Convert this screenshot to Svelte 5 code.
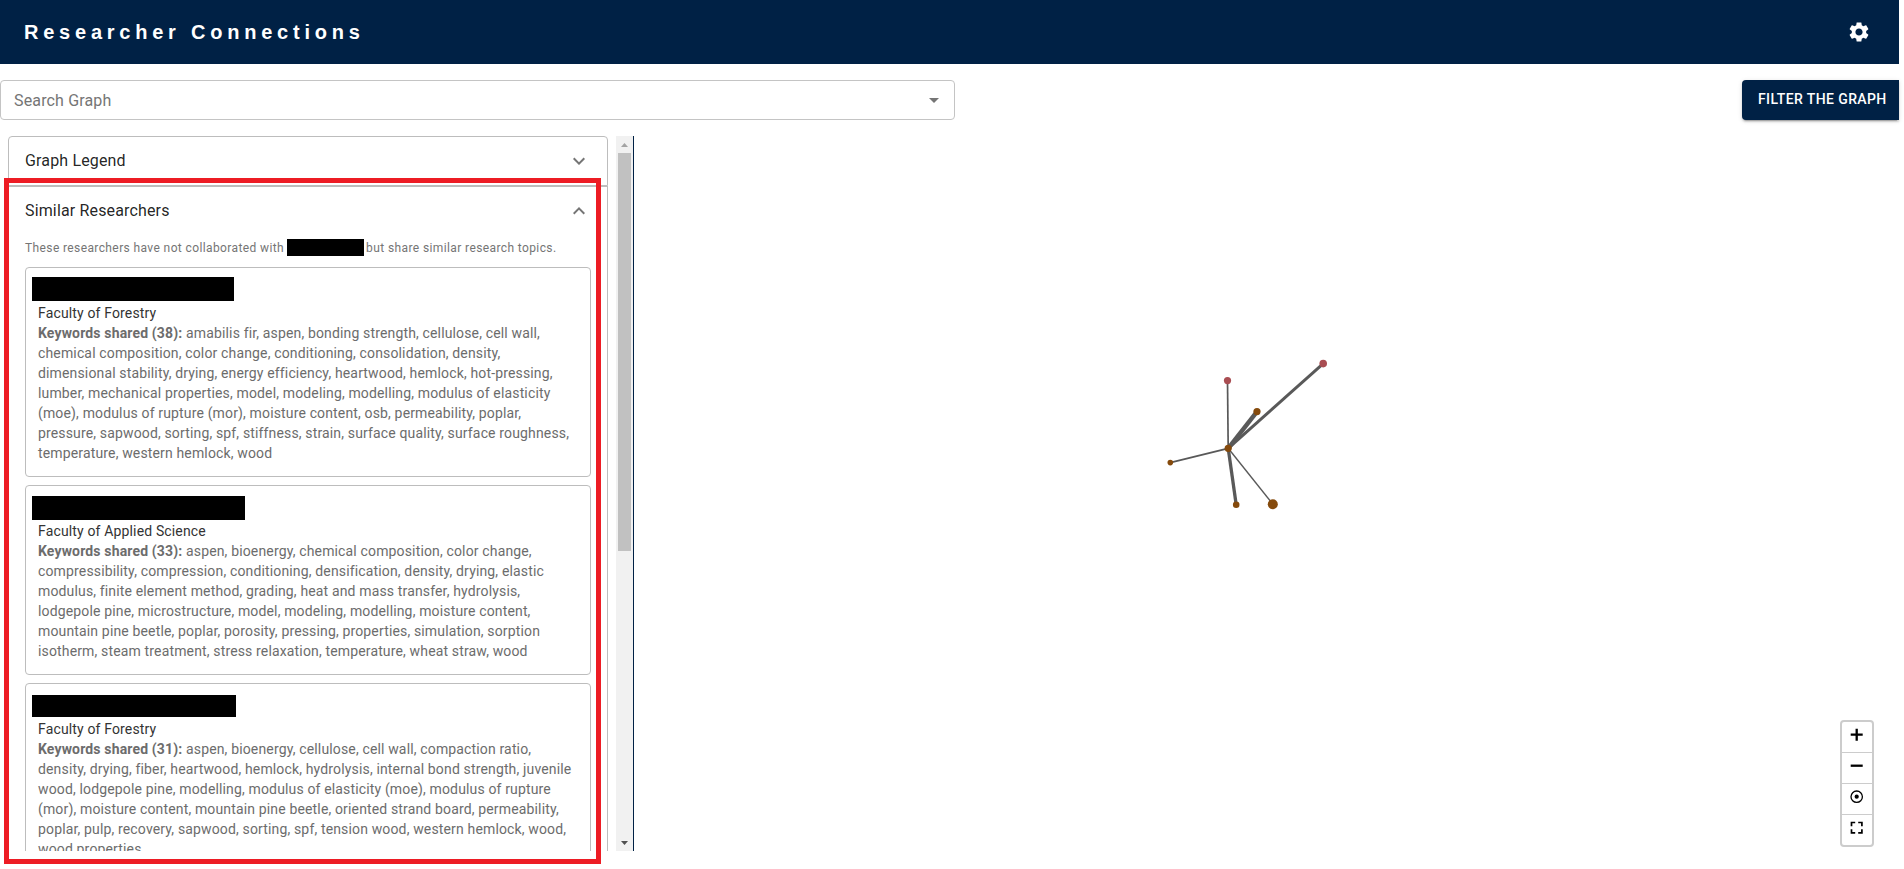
<script>
  const researchers = [
    {
      faculty: 'Faculty of Forestry', count: 38, bar: 202, barHeight: 24, top: 9, lead: 35,
      keywords: 'amabilis fir, aspen, bonding strength, cellulose, cell wall, chemical composition, color change, conditioning, consolidation, density, dimensional stability, drying, energy efficiency, heartwood, hemlock, hot-pressing, lumber, mechanical properties, model, modeling, modelling, modulus of elasticity (moe), modulus of rupture (mor), moisture content, osb, permeability, poplar, pressure, sapwood, sorting, spf, stiffness, strain, surface quality, surface roughness, temperature, western hemlock, wood'
    },
    {
      faculty: 'Faculty of Applied Science', count: 33, bar: 213, barHeight: 24, top: 10, lead: 35,
      keywords: 'aspen, bioenergy, chemical composition, color change, compressibility, compression, conditioning, densification, density, drying, elastic modulus, finite element method, grading, heat and mass transfer, hydrolysis, lodgepole pine, microstructure, model, modeling, modelling, moisture content, mountain pine beetle, poplar, porosity, pressing, properties, simulation, sorption isotherm, steam treatment, stress relaxation, temperature, wheat straw, wood'
    },
    {
      faculty: 'Faculty of Forestry', count: 31, bar: 204, barHeight: 22, top: 11, lead: 35,
      keywords: 'aspen, bioenergy, cellulose, cell wall, compaction ratio, density, drying, fiber, heartwood, hemlock, hydrolysis, internal bond strength, juvenile wood, lodgepole pine, modelling, modulus of elasticity (moe), modulus of rupture (mor), moisture content, mountain pine beetle, oriented strand board, permeability, poplar, pulp, recovery, sapwood, sorting, spf, tension wood, western hemlock, wood, wood properties'
    }
  ];
  const hub = { x: 1228.2, y: 448.3 };
  const nodes = [
    { x: 1227.5, y: 380.6, r: 3.6, w: 1.7, c: '#a94d52' },
    { x: 1323.2, y: 363.6, r: 3.8, w: 3, c: '#a94d52' },
    { x: 1257, y: 411.6, r: 3.6, w: 4.4, c: '#854a0c' },
    { x: 1170.3, y: 462.6, r: 2.8, w: 1.7, c: '#854a0c' },
    { x: 1236.2, y: 504.8, r: 3.3, w: 3.3, c: '#854a0c' },
    { x: 1272.8, y: 504.2, r: 5, w: 1.4, c: '#854a0c' }
  ];
</script>

<div class="page">
  <header>
    <h1>Researcher Connections</h1>
    <svg width="24" height="24" viewBox="0 0 24 24" fill="#fff"><path d="M19.14 12.94c.04-.3.06-.61.06-.94 0-.32-.02-.64-.07-.94l2.03-1.58c.18-.14.23-.41.12-.61l-1.92-3.32c-.12-.22-.37-.29-.59-.22l-2.39.96c-.5-.38-1.03-.7-1.62-.94l-.36-2.54c-.04-.24-.24-.41-.48-.41h-3.84c-.24 0-.43.17-.47.41l-.36 2.54c-.59.24-1.13.57-1.62.94l-2.39-.96c-.22-.08-.47 0-.59.22L2.74 8.87c-.12.21-.08.47.12.61l2.03 1.58c-.05.3-.09.63-.09.94s.02.64.07.94l-2.03 1.58c-.18.14-.23.41-.12.61l1.92 3.32c.12.22.37.29.59.22l2.39-.96c.5.38 1.03.7 1.62.94l.36 2.54c.05.24.24.41.48.41h3.84c.24 0 .44-.17.47-.41l.36-2.54c.59-.24 1.13-.56 1.62-.94l2.39.96c.22.08.47 0 .59-.22l1.92-3.32c.12-.22.07-.47-.12-.61l-2.01-1.58zM12 15.6c-1.98 0-3.6-1.62-3.6-3.6s1.62-3.6 3.6-3.6 3.6 1.62 3.6 3.6-1.62 3.6-3.6 3.6z" /></svg>
  </header>

  <div class="tools">
    <div class="search">
      <span>Search Graph</span>
      <svg width="24" height="24" viewBox="0 0 24 24" fill="#757575"><path d="M7 10l5 5 5-5z" /></svg>
    </div>
    <button class="filter">FILTER THE GRAPH</button>
  </div>

  <main>
    <aside>
      <div class="panels">
        <section class="panel first">
          <div class="summary">
            <span>Graph Legend</span>
            <svg width="24" height="24" viewBox="0 0 24 24" fill="#757575"><path d="M16.59 8.59 12 13.17 7.41 8.59 6 10l6 6 6-6z" /></svg>
          </div>
        </section>
        <section class="panel">
          <div class="summary">
            <span>Similar Researchers</span>
            <svg class="open" width="24" height="24" viewBox="0 0 24 24" fill="#757575"><path d="M16.59 8.59 12 13.17 7.41 8.59 6 10l6 6 6-6z" /></svg>
          </div>
          <div class="note"><span>These researchers have not collaborated with</span><i></i><span>but share similar research topics.</span></div>
          <div class="cards">
            {#each researchers as r}
              <article>
                <div class="name" style="height:{r.lead}px;padding-top:{r.top}px"><i style="width:{r.bar}px;height:{r.barHeight}px"></i></div>
                <div class="faculty">{r.faculty}</div>
                <p><b>Keywords shared ({r.count}):</b> {r.keywords}</p>
              </article>
            {/each}
          </div>
        </section>
      </div>
      <div class="scroll">
        <svg width="17" height="17" fill="#a3a3a3"><path d="M5 11h7L8.500 7z" /></svg>
        <div class="thumb"></div>
        <svg width="17" height="17" fill="#505050"><path d="M5 7h7L8.500 11z" /></svg>
      </div>
    </aside>
  </main>

  <svg class="graph" width="1270" height="733" viewBox="634 136 1270 733">
    {#each nodes as n}
      <line x1={hub.x} y1={hub.y} x2={n.x} y2={n.y} stroke="#595959" stroke-width={n.w} />
    {/each}
    {#each nodes as n}
      <circle cx={n.x} cy={n.y} r={n.r} fill={n.c} />
    {/each}
    <circle cx={hub.x} cy={hub.y} r="3.6" fill="#854a0c" />
  </svg>

  <div class="controls">
    <div><svg width="30" height="30" viewBox="0.300 1.800 30 30"><path d="M9 14.500h12M15 8.500v12" stroke="#000" stroke-width="2.300" /></svg></div>
    <div><svg width="30" height="30" viewBox="0.300 1.800 30 30"><path d="M9 14.500h12" stroke="#000" stroke-width="2.300" /></svg></div>
    <div><svg width="30" height="30" viewBox="0.300 1.800 30 30"><circle cx="15" cy="14.500" r="5.700" fill="none" stroke="#000" stroke-width="1.300" /><circle cx="15" cy="14.500" r="2.100" /></svg></div>
    <div><svg width="30" height="30" viewBox="0.300 1.800 30 30"><path d="M9.800 13V9.300h3.700M16.500 9.300h3.700V13M20.200 16V19.700H16.500M13.500 19.700H9.800V16" fill="none" stroke="#000" stroke-width="1.700" /></svg></div>
  </div>
  <div class="highlight"></div>
</div>

<style>
  :global(body) { background: #fff; overflow: hidden; }
  .page { position: relative; width: 1904px; height: 869px; overflow: hidden; box-sizing: border-box; padding-right: 5px; font-family: Roboto, sans-serif; color: rgba(0, 0, 0, .87); }
  header { height: 64px; background: #002145; display: flex; align-items: center; justify-content: space-between; padding: 0 28px 0 24px; box-sizing: border-box; }
  h1 { margin: 0; font: bold 20px/24px "Liberation Sans", Arial, sans-serif; letter-spacing: 4.77px; color: #fff; white-space: nowrap; }
  header svg { display: block; }
  .tools { display: flex; justify-content: space-between; padding-top: 16px; height: 40px; }
  .search { box-sizing: border-box; width: 955px; height: 40px; border: 1px solid #c4c4c4; border-radius: 4px; display: flex; align-items: center; justify-content: space-between; padding: 0 8px 0 13px; font-size: 16px; letter-spacing: .15px; color: #757575; }
  .filter { box-sizing: border-box; width: 157px; height: 40px; border: 0; border-radius: 4px 0 0 4px; background: #002145; color: #fff; font: 500 14px/24px Roboto, sans-serif; letter-spacing: .4px; text-align: left; padding: 0 0 2px 16px; white-space: nowrap; box-shadow: 0 3px 1px -2px rgba(0,0,0,.2), 0 2px 2px rgba(0,0,0,.14), 0 1px 5px rgba(0,0,0,.12); }
  main { padding-top: 16px; }
  aside { display: flex; justify-content: space-between; width: 633px; height: 715px; border-right: 1px solid #002145; overflow: hidden; }
  .panels { width: 600px; margin-left: 8px; flex: none; }
  .panel { border: 1px solid #bdbdbd; box-sizing: border-box; }
  .panel.first { border-radius: 4px 4px 0 0; height: 50px; }
  .summary { height: 48px; display: flex; align-items: center; justify-content: space-between; padding: 0 16px; font-size: 16px; letter-spacing: .15px; }
  .summary span { padding-bottom: 2px; }
  .open { transform: rotate(180deg); }
  .note { display: flex; align-items: center; height: 20px; margin-top: 3px; padding-left: 16px; font-size: 12px; letter-spacing: .39px; color: #757575; white-space: nowrap; }
  .note i { width: 77px; height: 17px; background: #000; margin: 0 2.500px 2px; }
  .cards { margin: 9px 16px 0; display: flex; flex-direction: column; gap: 8px; }
  article { box-sizing: border-box; border: 1px solid #bdbdbd; border-radius: 4px; padding: 0 12px 13px; font-size: 14px; line-height: 20px; letter-spacing: .15px; }
  .name { box-sizing: border-box; }
  .name i { display: block; margin-left: -6px; background: #000; }
  .faculty { color: #333; }
  p { margin: 0; color: #6c6c6c; }
  b { font-weight: 700; }
  .scroll { width: 17px; height: 715px; background: #f1f1f1; display: flex; flex-direction: column; align-items: center; }
  .scroll svg { display: block; }
  .thumb { width: 13px; height: 398px; background: #c1c1c1; margin-bottom: auto; }
  .graph { position: absolute; left: 634px; top: 136px; }
  .controls { position: absolute; left: 1840px; top: 720px; width: 30px; border: 2px solid #ccc; border-radius: 4px; background: #fff; }
  .controls div { height: 30px; }
  .controls div + div { border-top: 1px solid #ccc; }
  .controls svg { display: block; }
  .highlight { position: absolute; left: 4px; top: 178px; width: 597px; height: 686px; box-sizing: border-box; border: 5px solid #ed1c24; }
</style>
